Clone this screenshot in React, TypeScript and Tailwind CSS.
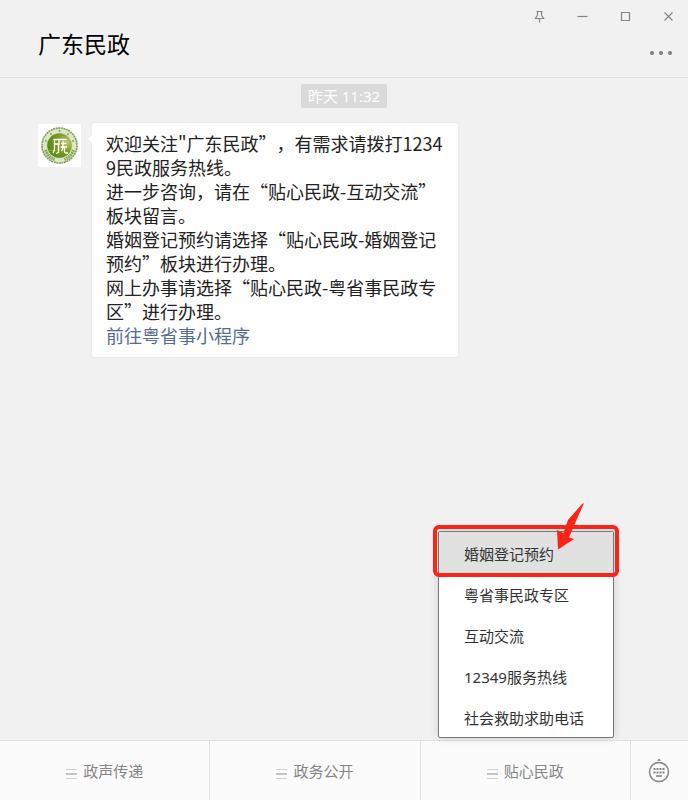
import { useState } from 'react'

const menus = ['政声传递', '政务公开', '贴心民政']

const subMenu = ['婚姻登记预约', '粤省事民政专区', '互动交流', '12349服务热线', '社会救助求助电话']

const messages = [
    '欢迎关注"广东民政”，有需求请拨打12349民政服务热线。',
    '进一步咨询，请在“贴心民政-互动交流”板块留言。',
    '婚姻登记预约请选择“贴心民政-婚姻登记预约”板块进行办理。',
    '网上办事请选择“贴心民政-粤省事民政专区”进行办理。',
]

function WindowControls() {
    return (
        <div className="flex items-center gap-7 text-[#858585]">
            <button aria-label="置顶">
                <svg className="block" width="15" height="15" viewBox="0 0 15 15" fill="none" stroke="currentColor" strokeWidth="1.200">
                    <path d="M4.500 2.500h6M5.500 2.500v3.700L3.400 9.500h8.200L9.500 6.200V2.500M7.500 9.500v4" />
                </svg>
            </button>
            <button aria-label="最小化">
                <svg className="block" width="15" height="15" viewBox="0 0 15 15" fill="none" stroke="currentColor" strokeWidth="1.200">
                    <path d="M2.500 7.500h10" />
                </svg>
            </button>
            <button aria-label="最大化">
                <svg className="block" width="15" height="15" viewBox="0 0 15 15" fill="none" stroke="currentColor" strokeWidth="1.200">
                    <path d="M3.500 3.500h8v8h-8z" />
                </svg>
            </button>
            <button aria-label="关闭">
                <svg className="block" width="15" height="15" viewBox="0 0 15 15" fill="none" stroke="currentColor" strokeWidth="1.200">
                    <path d="M3.500 3.500l8 8M11.500 3.500l-8 8" />
                </svg>
            </button>
        </div>
    )
}

function Avatar() {
    return (
        <svg className="size-[43px] shrink-0 bg-white" viewBox="0 0 43 43" fill="none">
            <defs>
                <radialGradient id="badge" cx="0.8" cy="0.35" r="0.8">
                    <stop offset="0" stopColor="#b9c46c" />
                    <stop offset="0.5" stopColor="#7c9c24" />
                    <stop offset="1" stopColor="#568a14" />
                </radialGradient>
            </defs>
            <circle cx="21.500" cy="21.500" r="17.500" fill="#dde6c8" stroke="#7fa055" strokeWidth="1.600" strokeDasharray="2 0.600" />
            <path d="M7.500 26a15 15 0 0 0 9 9.500M35.500 26a15 15 0 0 1-9 9.500" stroke="#86a65c" strokeWidth="3" strokeDasharray="1.800 0.600" />
            <g fill="#7c9c50">
                <circle cx="8" cy="17" r="0.900" />
                <circle cx="13" cy="10" r="0.900" />
                <circle cx="21.500" cy="7" r="0.900" />
                <circle cx="30" cy="10" r="0.900" />
                <circle cx="35" cy="17" r="0.900" />
            </g>
            <circle cx="21.500" cy="21.500" r="12.300" fill="url(#badge)" />
            <path d="M10.500 26c6 2 16-2 22-8" stroke="#b6bf4c" strokeWidth="1.200" opacity="0.600" />
            <g stroke="#fff" strokeWidth="1.300">
                <path d="M15.500 15.500h13M16.500 15.500v9c0 2-.5 3.500-1.500 4.500M16.500 20h4.500v-4.500M20.500 20v8.500l-2.500 1M23 19.500h5.500M22.500 23h6.500M25 17v6c0 2-.5 3-1.500 4M26.500 23v4.500c0 1 .5 1.500 1.500 1.500h2" />
            </g>
        </svg>
    )
}

function KeyboardIcon() {
    return (
        <svg className="block" width="24" height="28" viewBox="0 0 24 28" fill="none">
            <path d="M9.800 3.800L12 1.500l2.200 2.300z" fill="#858585" />
            <circle cx="12" cy="15" r="9.500" stroke="#858585" strokeWidth="1.500" />
            <path d="M6.500 12h11M6.500 15.500h11" stroke="#858585" strokeWidth="2" strokeDasharray="2 1" />
            <path d="M9 19h6" stroke="#858585" strokeWidth="1.600" />
        </svg>
    )
}

export default function App() {
    const [active, setActive] = useState(0)

    return (
        <div lang="zh-CN" className="flex min-h-screen flex-col bg-[#f1f1f1] font-['Noto_Sans','Noto_Sans_CJK_SC',sans-serif] [text-spacing-trim:space-all]">
            <header className="flex h-[78px] justify-between border-b border-[#e2e2e2] pr-3 pl-[38px]">
                <h1 className="pt-7 text-[23px] leading-8 text-black">广东民政</h1>
                <div className="flex flex-col items-end gap-[27px] pt-[9px]">
                    <WindowControls />
                    <button aria-label="更多" className="mr-1 flex gap-[5px]">
                        <span className="size-1 rounded-full bg-[#7d7d7d]" />
                        <span className="size-1 rounded-full bg-[#7d7d7d]" />
                        <span className="size-1 rounded-full bg-[#7d7d7d]" />
                    </button>
                </div>
            </header>

            <main className="flex-1 pt-1.5">
                <div className="flex justify-center">
                    <time className="rounded-xs bg-[#dadada] px-[7px] text-[15px] leading-6 text-white">昨天 11:32</time>
                </div>
                <div className="mt-[15px] flex gap-[11px] pl-[38px]">
                    <div className="pt-px">
                        <Avatar />
                    </div>
                    <div className="relative w-[366px] rounded-xs bg-white px-3.5 pt-2 pb-2.5 font-['Noto_Sans_CJK_SC',sans-serif] text-lg leading-6 break-all text-[#222] shadow-[0_0_1px_#ccc]">
                        <span className="absolute top-3 -left-1 border-y-4 border-r-4 border-y-transparent border-r-white" />
                        {messages.map((line) => (
                            <p key={line}>{line}</p>
                        ))}
                        <a href="#" className="block text-[#576b95]">前往粤省事小程序</a>
                    </div>
                </div>
            </main>

            <footer className="flex h-[60px] border-t border-[#e0e0e0] bg-[#fbfbfb]">
                {menus.map((menu, i) => (
                    <div key={menu} className="relative flex flex-1 border-r border-[#e0e0e0]">
                        <button className="flex flex-1 items-center justify-center gap-1.5 pt-0.5 text-[15px] text-[#858585]">
                            <svg className="mt-1" width="11" height="10" viewBox="0 0 11 10">
                                <path d="M0 .5h11M0 9.500h11" stroke="#d0d0d0" />
                                <path d="M0 5h11" stroke="#c4c4c4" strokeWidth="2" />
                            </svg>
                            {menu}
                        </button>
                        {i === 2 && (
                            <div className="absolute right-4 bottom-full mb-[3px] w-44 rounded-xs border border-[#777] bg-white shadow-[0_0_8px_rgba(0,0,0,0.15)]">
                                {subMenu.map((item, n) => (
                                    <button
                                        key={item}
                                        onClick={() => setActive(n)}
                                        className={`block h-[41px] w-full pt-1 pl-[25px] text-left text-[15px] text-[#333] ${n === active ? 'bg-[#e1e1e1]' : ''}`}
                                    >
                                        {item}
                                    </button>
                                ))}
                                <div className="pointer-events-none absolute -inset-x-1.5 -top-[7px] h-[52px] rounded-md border-4 border-[#fc2317]" />
                                <svg className="pointer-events-none absolute -top-[30px] right-[27px]" width="30" height="50" viewBox="0 0 30 50">
                                    <path d="M28 1L26 2 12 18 7.500 31 1 28 2 47.500 18 37 13 35.500 20.500 18z" fill="#fc2317" />
                                </svg>
                            </div>
                        )}
                    </div>
                ))}
                <button aria-label="键盘" className="flex w-[57px] items-center justify-center">
                    <KeyboardIcon />
                </button>
            </footer>
        </div>
    )
}
